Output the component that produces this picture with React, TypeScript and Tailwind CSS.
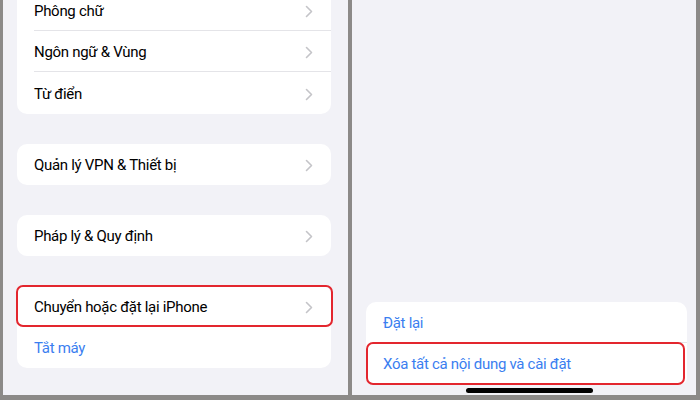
import React from 'react';

const font = { fontFamily: 'Roboto, "Noto Sans", "Liberation Sans", sans-serif' };

function Chevron() {
  return (
    <svg width="8" height="13" viewBox="0 0 8 13" className="shrink-0">
      <path d="M1.5 1.5 L6.5 6.5 L1.5 11.5" fill="none" stroke="#c4c4c8" strokeWidth="1.6" strokeLinecap="round" strokeLinejoin="round" />
    </svg>
  );
}

function Row({ label, last, blue, chevron = true, height = 'h-[41px]' }: { label: string; last?: boolean; blue?: boolean; chevron?: boolean; height?: string }) {
  return (
    <div className={`flex items-center ${height} pl-[17px]`}>
      <div className={`flex items-center h-full flex-1 pr-[18px] pt-[2px] ${last ? '' : 'border-b border-[#e4e4e8]'}`}>
        <span className={`flex-1 text-[15px] tracking-[-0.3px] ${blue ? 'text-[#3a7ef0]' : 'text-black'}`}>{label}</span>
        {chevron && <Chevron />}
      </div>
    </div>
  );
}

function Card({ children }: { children: React.ReactNode }) {
  return <div className="bg-white rounded-[10px] overflow-hidden">{children}</div>;
}

export default function App() {
  return (
    <div className="w-[700px] h-[400px] bg-[#8c8a88] flex pl-[3px] pr-[4px] pb-[5px] gap-[4px]" style={font}>
      {/* Left screen */}
      <div className="w-[345px] h-full bg-[#f2f2f7] overflow-hidden pl-[14px] pr-[17px]">
        <div className="-mt-[10px] flex flex-col">
          <Card>
            <Row label="Phông chữ" />
            <Row label="Ngôn ngữ & Vùng" />
            <Row label="Từ điển" last height="h-[42px]" />
          </Card>
          <div className="h-[30px]" />
          <Card>
            <Row label="Quản lý VPN & Thiết bị" last />
          </Card>
          <div className="h-[30px]" />
          <Card>
            <Row label="Pháp lý & Quy định" last />
          </Card>
          <div className="h-[29px]" />
          <div className="bg-white rounded-[10px]">
            <div className="relative">
              <Row label="Chuyển hoặc đặt lại iPhone" last height="h-[42px]" />
              <div className="absolute -left-[1px] -right-[2px] top-0 bottom-0 border-2 border-[#e3262e] rounded-[7px]" />
            </div>
            <Row label="Tắt máy" blue last chevron={false} />
          </div>
        </div>
      </div>

      {/* Right screen */}
      <div className="w-[344px] h-full bg-[#f2f2f7] flex flex-col pl-[14px] pr-[9px]">
        <div className="h-[302px]" />
        <div className="bg-white rounded-t-[10px] rounded-b-[6px]">
          <Row label="Đặt lại" blue chevron={false} />
          <div className="relative">
            <Row label="Xóa tất cả nội dung và cài đặt" blue last chevron={false} />
            <div className="absolute left-0 right-[2px] -top-[1px] -bottom-[1px] border-2 border-[#e3262e] rounded-[7px]" />
          </div>
        </div>
        <div className="flex justify-center pt-[4px]">
          <div className="w-[127px] h-[5px] rounded-full bg-black ml-[6px]" />
        </div>
      </div>
    </div>
  );
}
